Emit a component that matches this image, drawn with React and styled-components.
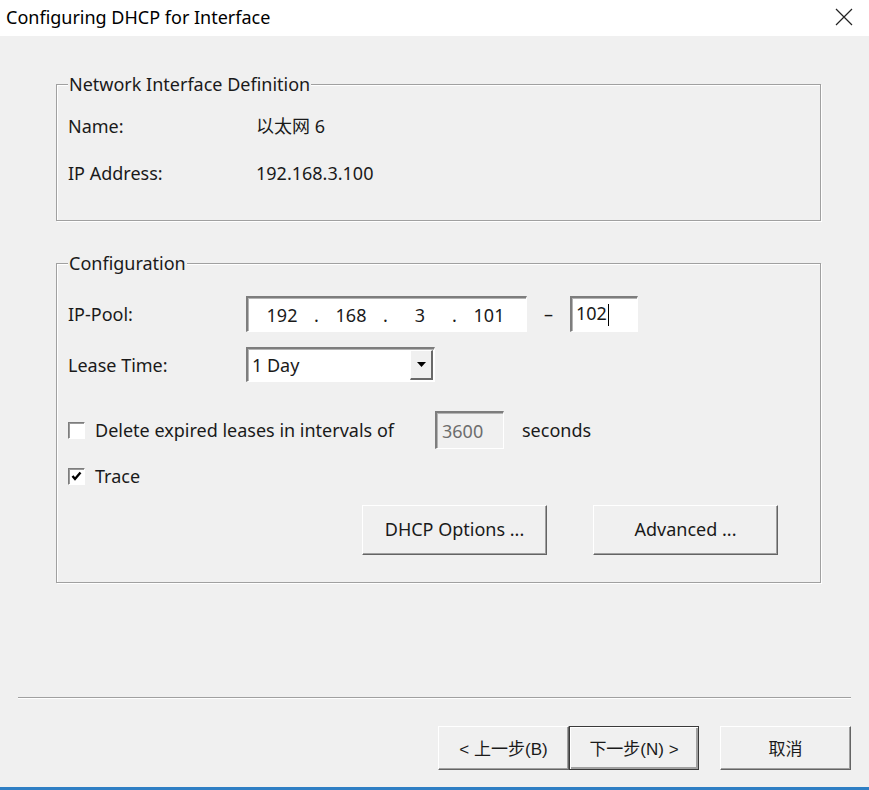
import React from "react";
import styled, { createGlobalStyle } from "styled-components";

const GlobalStyle = createGlobalStyle`
  html, body {
    margin: 0;
    padding: 0;
    background: #f0f0f0;
  }
  body {
    font-family: "Noto Sans", "Noto Sans CJK SC", sans-serif;
    font-size: 18px;
    color: #1a1a1a;
  }
  * {
    box-sizing: border-box;
  }
`;

const Window = styled.div`
  width: 869px;
  height: 790px;
  display: flex;
  flex-direction: column;
  overflow: hidden;
`;

const TitleBar = styled.div`
  height: 36px;
  background: #ffffff;
  display: flex;
  align-items: center;
  justify-content: space-between;
  padding: 0 16px 2px 6px;
  font-size: 18px;
  color: #000;
`;

const CloseIcon = styled.svg`
  width: 18px;
  height: 18px;
  display: block;
`;

const Body = styled.div`
  flex: 1;
  background: #f0f0f0;
  display: flex;
  flex-direction: column;
  padding: 38px 0 0 56px;
`;

const Group = styled.fieldset`
  margin: ${({ $top }) => $top || "0"} 0 0 0;
  width: 765px;
  border: 1px solid #a0a0a0;
  box-shadow: 1px 1px 0 #ffffff, inset 1px 1px 0 #ffffff;
  padding: ${({ $pad }) => $pad || "0 11px"};
  min-width: 0;
`;

const Legend = styled.legend`
  padding: 0 1px;
  line-height: 20px;
  background: #f0f0f0;
  color: #1a1a1a;
`;

const Row = styled.div`
  display: flex;
  align-items: center;
  height: ${({ $h }) => $h || "20px"};
  margin-top: ${({ $mt }) => $mt || "0"};
`;

const Label = styled.div`
  width: ${({ $w }) => $w || "188px"};
  flex-shrink: 0;
  line-height: 20px;
  white-space: nowrap;
`;

const Value = styled.div`
  line-height: 20px;
  margin-left: ${({ $ml }) => $ml || "0"};
`;

const Sunken = styled.div`
  background: ${({ $disabled }) => ($disabled ? "#f0f0f0" : "#ffffff")};
  border-style: solid;
  border-width: 2px 1px 1px 2px;
  border-color: #7d7d7d #ffffff #ffffff #7d7d7d;
  box-shadow: inset 1px 1px 0 #b4b4b4;
  height: ${({ $h }) => $h || "36px"};
  width: ${({ $w }) => $w};
  display: flex;
  align-items: center;
  position: relative;
  flex-shrink: 0;
`;

const IpGrid = styled.div`
  display: grid;
  grid-template-columns: 64px 5px 64px 5px 64px 5px 64px;
  padding-left: 2px;
  text-align: center;
  line-height: 20px;
`;

const Dot = styled.span`
  text-align: center;
`;

const Dash = styled.span`
  width: 43px;
  text-align: center;
`;

const FieldText = styled.span`
  padding-left: ${({ $pl }) => $pl || "4px"};
  color: ${({ $muted }) => ($muted ? "#6d6d6d" : "#1a1a1a")};
  line-height: 20px;
`;

const Caret = styled.span`
  display: inline-block;
  width: 1px;
  height: 22px;
  background: #000;
  vertical-align: middle;
  margin-left: 1px;
  margin-top: -2px;
`;

const DropButton = styled.div`
  position: absolute;
  top: 1px;
  right: 1px;
  bottom: 1px;
  width: 23px;
  background: #f0f0f0;
  border-style: solid;
  border-width: 1px 2px 2px 1px;
  border-color: #ffffff #696969 #696969 #ffffff;
  display: flex;
  align-items: center;
  justify-content: center;
`;

const CheckBox = styled.div`
  width: 17px;
  height: 17px;
  background: #ffffff;
  border-style: solid;
  border-width: 1px;
  border-color: #7d7d7d #ffffff #ffffff #7d7d7d;
  box-shadow: inset 1px 1px 0 #9a9a9a;
  margin-right: 10px;
  display: flex;
  align-items: center;
  justify-content: center;
  flex-shrink: 0;
`;

const ButtonRow = styled.div`
  display: flex;
  justify-content: flex-end;
  gap: ${({ $gap }) => $gap || "0"};
  margin-top: ${({ $mt }) => $mt || "0"};
  padding-right: ${({ $pr }) => $pr || "0"};
`;

const Button = styled.button`
  font: inherit;
  color: #1a1a1a;
  width: ${({ $w }) => $w || "185px"};
  height: ${({ $h }) => $h || "50px"};
  margin-left: ${({ $ml }) => $ml || "0"};
  background: #f0f0f0;
  border-style: solid;
  border-width: 1px;
  border-color: ${({ $default }) =>
    $default ? "#3a3a3a" : "#ffffff #646464 #646464 #ffffff"};
  box-shadow: ${({ $default }) =>
    $default
      ? "inset 1px 1px 0 #ffffff, inset -2px -2px 0 #a0a0a0"
      : "inset -1px -1px 0 #a0a0a0"};
  padding: 0 0 2px 0;
  cursor: default;
`;

const CjkButton = styled(Button)`
  font-family: "Liberation Sans", "Noto Sans CJK SC", sans-serif;
  font-size: 17px;
`;

const Footer = styled.div`
  margin-top: auto;
  margin-left: -56px;
  padding: 0 18px 17px 18px;
`;

const Separator = styled.div`
  height: 2px;
  border-top: 1px solid #a0a0a0;
  border-bottom: 1px solid #ffffff;
  margin-bottom: 27px;
`;

const BottomEdge = styled.div`
  height: 3px;
  background: #2f7fc4;
`;

const CheckMark = () => (
  <svg width="11" height="11" viewBox="0 0 11 11">
    <path d="M1.5 5 L4 8 L9.5 1.5" fill="none" stroke="#000" strokeWidth="2.4" />
  </svg>
);

const App = () => {
  return (
    <Window>
      <GlobalStyle />
      <TitleBar>
        <span>Configuring DHCP for Interface</span>
        <CloseIcon viewBox="0 0 18 18">
          <path d="M1 1 L17 17 M17 1 L1 17" stroke="#222" strokeWidth="1.2" />
        </CloseIcon>
      </TitleBar>
      <Body>
        <Group $pad="22px 11px 37px 11px">
          <Legend>Network Interface Definition</Legend>
          <Row>
            <Label>Name:</Label>
            <Value>以太网 6</Value>
          </Row>
          <Row $mt="27px">
            <Label>IP Address:</Label>
            <Value>192.168.3.100</Value>
          </Row>
        </Group>

        <Group $top="32px" $pad="23px 11px 27px 11px">
          <Legend>Configuration</Legend>
          <Row $h="36px">
            <Label $w="178px">IP-Pool:</Label>
            <Sunken $w="281px">
              <IpGrid>
                <span>192</span>
                <Dot>.</Dot>
                <span>168</span>
                <Dot>.</Dot>
                <span>3</span>
                <Dot>.</Dot>
                <span>101</span>
              </IpGrid>
            </Sunken>
            <Dash>–</Dash>
            <Sunken $w="68px">
              <FieldText $pl="4px">
                102
                <Caret />
              </FieldText>
            </Sunken>
          </Row>
          <Row $h="35px" $mt="15px">
            <Label $w="178px">Lease Time:</Label>
            <Sunken $w="189px" $h="35px">
              <FieldText>1 Day</FieldText>
              <DropButton>
                <svg width="9" height="5" viewBox="0 0 9 5">
                  <path d="M0 0 H9 L4.5 5 Z" fill="#000" />
                </svg>
              </DropButton>
            </Sunken>
          </Row>
          <Row $h="38px" $mt="29px">
            <CheckBox />
            <Label $w="340px">Delete expired leases in intervals of</Label>
            <Sunken $w="69px" $h="38px" $disabled>
              <FieldText $muted $pl="5px">3600</FieldText>
            </Sunken>
            <Value $ml="18px">seconds</Value>
          </Row>
          <Row $h="24px" $mt="15px">
            <CheckBox>
              <CheckMark />
            </CheckBox>
            <Value>Trace</Value>
          </Row>
          <ButtonRow $mt="17px" $gap="46px" $pr="31px">
            <Button>DHCP Options ...</Button>
            <Button>Advanced ...</Button>
          </ButtonRow>
        </Group>

        <Footer>
          <Separator />
          <ButtonRow>
            <CjkButton $w="131px" $h="44px">&lt; 上一步(B)</CjkButton>
            <CjkButton $w="130px" $h="44px" $default>
              下一步(N) &gt;
            </CjkButton>
            <CjkButton $w="131px" $h="44px" $ml="21px">
              取消
            </CjkButton>
          </ButtonRow>
        </Footer>
      </Body>
      <BottomEdge />
    </Window>
  );
};

export default App;
